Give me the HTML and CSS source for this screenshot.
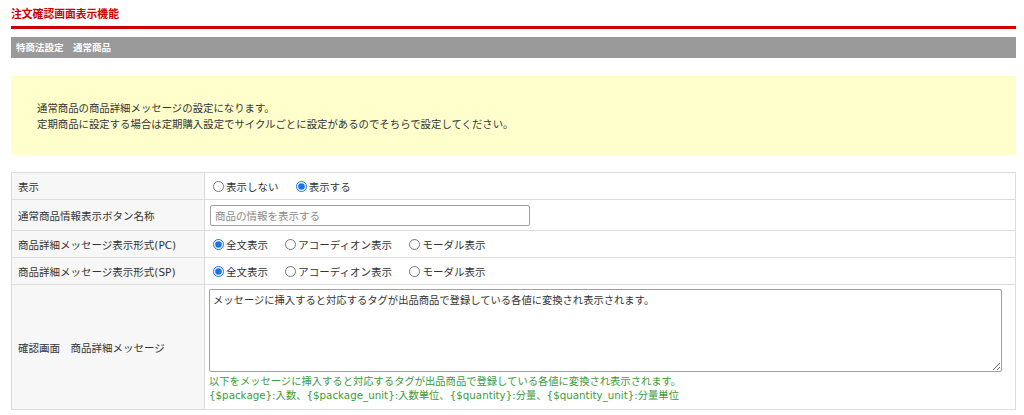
FILE: index.html
```html
<!DOCTYPE html>
<html lang="ja">
<head>
<meta charset="utf-8">
<title>注文確認画面表示機能</title>
<link rel="stylesheet" href="styles.css">
</head>
<body>
<div class="page">
  <h1 class="title">注文確認画面表示機能</h1>
  <div class="bar">特商法設定　通常商品</div>
  <div class="notice">
    <p>通常商品の商品詳細メッセージの設定になります。<br>定期商品に設定する場合は定期購入設定でサイクルごとに設定があるのでそちらで設定してください。</p>
  </div>
  <table class="form">
    <tr class="r1">
      <th>表示</th>
      <td>
        <label class="opt"><input type="radio" name="disp">表示しない</label>
        <label class="opt"><input type="radio" name="disp" checked>表示する</label>
      </td>
    </tr>
    <tr class="r2">
      <th>通常商品情報表示ボタン名称</th>
      <td><input class="text" type="text" placeholder="商品の情報を表示する"></td>
    </tr>
    <tr class="r1">
      <th>商品詳細メッセージ表示形式(PC)</th>
      <td>
        <label class="opt"><input type="radio" name="pc" checked>全文表示</label>
        <label class="opt"><input type="radio" name="pc">アコーディオン表示</label>
        <label class="opt"><input type="radio" name="pc">モーダル表示</label>
      </td>
    </tr>
    <tr class="r1">
      <th>商品詳細メッセージ表示形式(SP)</th>
      <td>
        <label class="opt"><input type="radio" name="sp" checked>全文表示</label>
        <label class="opt"><input type="radio" name="sp">アコーディオン表示</label>
        <label class="opt"><input type="radio" name="sp">モーダル表示</label>
      </td>
    </tr>
    <tr class="r5">
      <th>確認画面　商品詳細メッセージ</th>
      <td>
        <textarea class="area">メッセージに挿入すると対応するタグが出品商品で登録している各値に変換され表示されます。</textarea>
        <p class="hint">以下をメッセージに挿入すると対応するタグが出品商品で登録している各値に変換され表示されます。<br>{$package}:入数、{$package_unit}:入数単位、{$quantity}:分量、{$quantity_unit}:分量単位</p>
      </td>
    </tr>
  </table>
</div>
</body>
</html>
```

FILE: styles.css
```css
html, body {
  margin: 0;
  padding: 0;
  background: #fff;
}
body {
  font-family: "DejaVu Sans", "Noto Sans CJK JP", sans-serif;
  font-size: 10.5px;
  color: #333;
}
.page {
  margin: 0 8px 0 11px;
}
.title {
  margin: 0;
  padding-top: 6px;
  height: 20px;
  line-height: 14px;
  font-size: 10.8px;
  font-weight: bold;
  color: #cc0000;
  font-family: "Noto Sans CJK JP", sans-serif;
  border-bottom: 3px solid #cc0000;
}
.bar {
  margin-top: 8px;
  height: 21px;
  line-height: 21px;
  padding-left: 5px;
  background: #9a9a9a;
  color: #fff;
  font-weight: bold;
  font-size: 9.5px;
  font-family: "Noto Sans CJK JP", sans-serif;
}
.notice {
  margin-top: 18px;
  height: 79px;
  background: #ffffcc;
  display: flex;
  align-items: center;
  padding-left: 26px;
}
.notice p {
  margin: 0;
  line-height: 16px;
  font-family: "Noto Sans CJK JP", sans-serif;
  font-size: 10.4px;
  color: #333;
}
.form {
  margin-top: 17px;
  width: 100%;
  border-collapse: collapse;
  border: 1px solid #dddddd;
}
.form th, .form td {
  border: 1px solid #dddddd;
  text-align: left;
  vertical-align: middle;
  font-weight: normal;
}
.form th {
  width: 186px;
  padding: 0 0 0 6px;
  background: #f7f7f7;
  font-family: "DejaVu Sans", "Noto Sans CJK JP", sans-serif;
  color: #333;
}
.form td {
  padding: 0 4px;
  background: #fff;
}
.r1 th, .r1 td { height: 26px; }
.r2 th, .r2 td { height: 30px; }
.opt {
  display: inline-flex;
  align-items: center;
  margin-right: 10px;
  font-family: "Noto Sans CJK JP", sans-serif;
  color: #333;
}
.opt input {
  width: 11px;
  height: 11px;
  margin: 0 2px 0 4px;
  accent-color: #1a73e8;
}
.text {
  box-sizing: border-box;
  width: 320px;
  height: 21px;
  margin: 0 0 0 1px;
  padding: 0 4px;
  border: 1px solid #a0a0a0;
  border-radius: 2px;
  font-family: "Noto Sans CJK JP", sans-serif;
  font-size: 10.5px;
  display: block;
}
.text::placeholder { color: #8a8a8a; }
.r5 td {
  padding-top: 4px;
  padding-bottom: 7px;
}
.area {
  box-sizing: border-box;
  display: block;
  width: 793px;
  height: 83px;
  margin: 0;
  padding: 3px 3px;
  border: 1px solid #a0a0a0;
  border-radius: 2px;
  font-family: "Noto Sans CJK JP", sans-serif;
  font-size: 10.3px;
  line-height: 14px;
  color: #333;
  resize: vertical;
}
.hint {
  margin: 2px 0 0 0;
  line-height: 14px;
  color: #3c9a3c;
  font-family: "DejaVu Sans", "Noto Sans CJK JP", sans-serif;
  font-size: 10.3px;
}
```
